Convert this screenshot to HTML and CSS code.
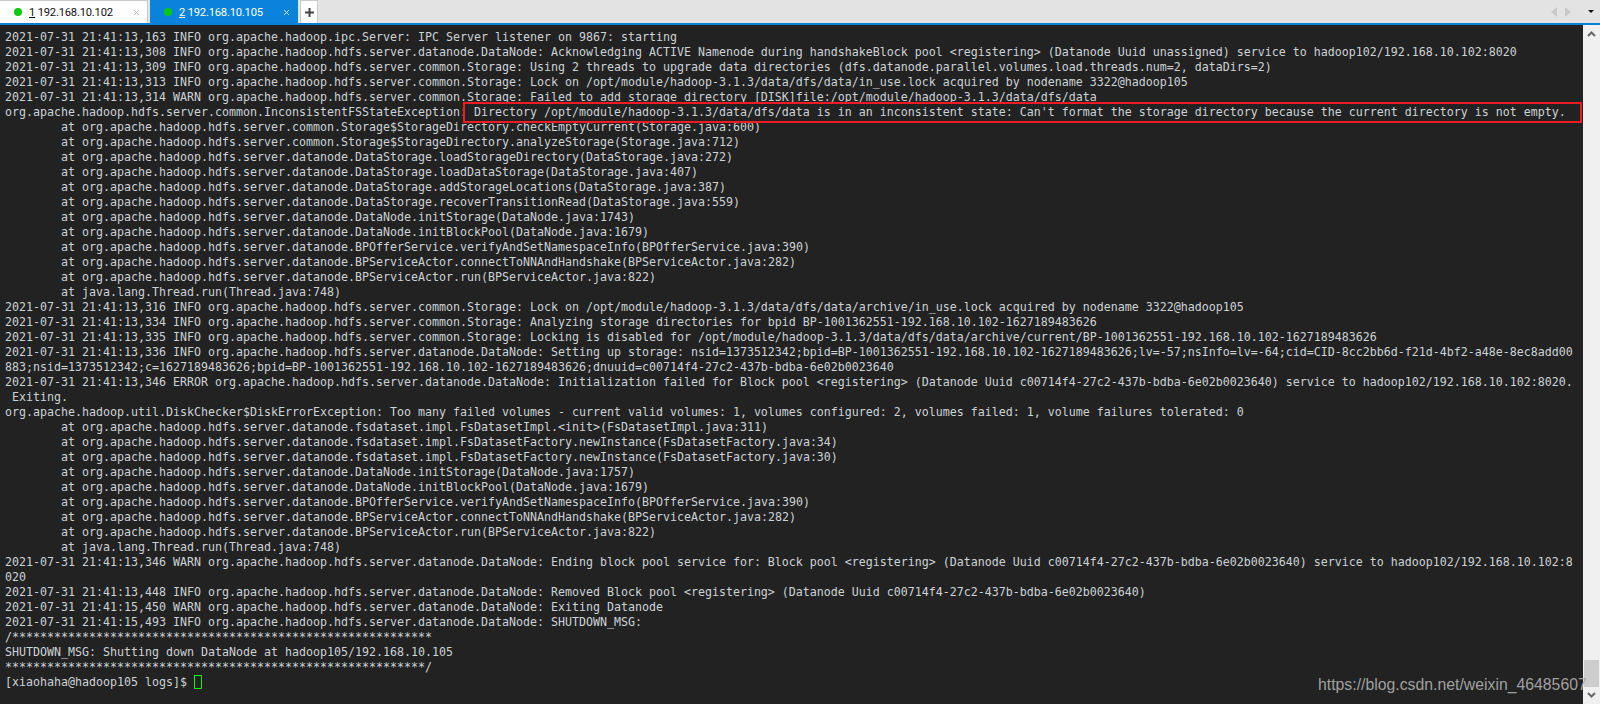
FILE: index.html
```html
<!DOCTYPE html>
<html lang="en">
<head>
<meta charset="utf-8">
<title>Xshell</title>
<link rel="stylesheet" href="styles.css">
</head>
<body>
<div class="app">
  <header class="tabbar">
    <div class="tab">
      <span class="dot"></span><span class="tab-label"><u>1</u> 192.168.10.102</span>
      <svg class="close" width="7" height="7" viewBox="0 0 7 7"><path d="M1 1l5 5M6 1L1 6" fill="none" stroke="#c4c4c4" stroke-width="1"/></svg>
    </div>
    <div class="tab active">
      <span class="dot"></span><span class="tab-label"><u>2</u> 192.168.10.105</span>
      <svg class="close" width="7" height="7" viewBox="0 0 7 7"><path d="M1 1l5 5M6 1L1 6" fill="none" stroke="#cfe6f7" stroke-width="1"/></svg>
    </div>
    <div class="add">
      <svg width="9" height="9" viewBox="0 0 9 9"><path d="M3.500 0h2v3.500H9v2H5.500V9h-2V5.500H0v-2h3.500z" fill="#444"/></svg>
    </div>
    <div class="tab-nav">
      <svg width="6" height="10" viewBox="0 0 6 10"><path d="M6 0v10L0 5z" fill="#c8c8c8"/></svg>
      <svg width="6" height="10" viewBox="0 0 6 10"><path d="M0 0v10L6 5z" fill="#c8c8c8"/></svg>
      <svg class="menu-arrow" width="6" height="3" viewBox="0 0 6 3"><path d="M0 0h6L3 3z" fill="#111"/></svg>
    </div>
  </header>
  <main class="body">
    <div class="term">
<pre class="output">2021-07-31 21:41:13,163 INFO org.apache.hadoop.ipc.Server: IPC Server listener on 9867: starting
2021-07-31 21:41:13,308 INFO org.apache.hadoop.hdfs.server.datanode.DataNode: Acknowledging ACTIVE Namenode during handshakeBlock pool &lt;registering&gt; (Datanode Uuid unassigned) service to hadoop102/192.168.10.102:8020
2021-07-31 21:41:13,309 INFO org.apache.hadoop.hdfs.server.common.Storage: Using 2 threads to upgrade data directories (dfs.datanode.parallel.volumes.load.threads.num=2, dataDirs=2)
2021-07-31 21:41:13,313 INFO org.apache.hadoop.hdfs.server.common.Storage: Lock on /opt/module/hadoop-3.1.3/data/dfs/data/in_use.lock acquired by nodename 3322@hadoop105
2021-07-31 21:41:13,314 WARN org.apache.hadoop.hdfs.server.common.Storage: Failed to add storage directory [DISK]file:/opt/module/hadoop-3.1.3/data/dfs/data
org.apache.hadoop.hdfs.server.common.InconsistentFSStateException: Directory /opt/module/hadoop-3.1.3/data/dfs/data is in an inconsistent state: Can't format the storage directory because the current directory is not empty.
	at org.apache.hadoop.hdfs.server.common.Storage$StorageDirectory.checkEmptyCurrent(Storage.java:600)
	at org.apache.hadoop.hdfs.server.common.Storage$StorageDirectory.analyzeStorage(Storage.java:712)
	at org.apache.hadoop.hdfs.server.datanode.DataStorage.loadStorageDirectory(DataStorage.java:272)
	at org.apache.hadoop.hdfs.server.datanode.DataStorage.loadDataStorage(DataStorage.java:407)
	at org.apache.hadoop.hdfs.server.datanode.DataStorage.addStorageLocations(DataStorage.java:387)
	at org.apache.hadoop.hdfs.server.datanode.DataStorage.recoverTransitionRead(DataStorage.java:559)
	at org.apache.hadoop.hdfs.server.datanode.DataNode.initStorage(DataNode.java:1743)
	at org.apache.hadoop.hdfs.server.datanode.DataNode.initBlockPool(DataNode.java:1679)
	at org.apache.hadoop.hdfs.server.datanode.BPOfferService.verifyAndSetNamespaceInfo(BPOfferService.java:390)
	at org.apache.hadoop.hdfs.server.datanode.BPServiceActor.connectToNNAndHandshake(BPServiceActor.java:282)
	at org.apache.hadoop.hdfs.server.datanode.BPServiceActor.run(BPServiceActor.java:822)
	at java.lang.Thread.run(Thread.java:748)
2021-07-31 21:41:13,316 INFO org.apache.hadoop.hdfs.server.common.Storage: Lock on /opt/module/hadoop-3.1.3/data/dfs/data/archive/in_use.lock acquired by nodename 3322@hadoop105
2021-07-31 21:41:13,334 INFO org.apache.hadoop.hdfs.server.common.Storage: Analyzing storage directories for bpid BP-1001362551-192.168.10.102-1627189483626
2021-07-31 21:41:13,335 INFO org.apache.hadoop.hdfs.server.common.Storage: Locking is disabled for /opt/module/hadoop-3.1.3/data/dfs/data/archive/current/BP-1001362551-192.168.10.102-1627189483626
2021-07-31 21:41:13,336 INFO org.apache.hadoop.hdfs.server.datanode.DataNode: Setting up storage: nsid=1373512342;bpid=BP-1001362551-192.168.10.102-1627189483626;lv=-57;nsInfo=lv=-64;cid=CID-8cc2bb6d-f21d-4bf2-a48e-8ec8add00
883;nsid=1373512342;c=1627189483626;bpid=BP-1001362551-192.168.10.102-1627189483626;dnuuid=c00714f4-27c2-437b-bdba-6e02b0023640
2021-07-31 21:41:13,346 ERROR org.apache.hadoop.hdfs.server.datanode.DataNode: Initialization failed for Block pool &lt;registering&gt; (Datanode Uuid c00714f4-27c2-437b-bdba-6e02b0023640) service to hadoop102/192.168.10.102:8020.
 Exiting.
org.apache.hadoop.util.DiskChecker$DiskErrorException: Too many failed volumes - current valid volumes: 1, volumes configured: 2, volumes failed: 1, volume failures tolerated: 0
	at org.apache.hadoop.hdfs.server.datanode.fsdataset.impl.FsDatasetImpl.&lt;init&gt;(FsDatasetImpl.java:311)
	at org.apache.hadoop.hdfs.server.datanode.fsdataset.impl.FsDatasetFactory.newInstance(FsDatasetFactory.java:34)
	at org.apache.hadoop.hdfs.server.datanode.fsdataset.impl.FsDatasetFactory.newInstance(FsDatasetFactory.java:30)
	at org.apache.hadoop.hdfs.server.datanode.DataNode.initStorage(DataNode.java:1757)
	at org.apache.hadoop.hdfs.server.datanode.DataNode.initBlockPool(DataNode.java:1679)
	at org.apache.hadoop.hdfs.server.datanode.BPOfferService.verifyAndSetNamespaceInfo(BPOfferService.java:390)
	at org.apache.hadoop.hdfs.server.datanode.BPServiceActor.connectToNNAndHandshake(BPServiceActor.java:282)
	at org.apache.hadoop.hdfs.server.datanode.BPServiceActor.run(BPServiceActor.java:822)
	at java.lang.Thread.run(Thread.java:748)
2021-07-31 21:41:13,346 WARN org.apache.hadoop.hdfs.server.datanode.DataNode: Ending block pool service for: Block pool &lt;registering&gt; (Datanode Uuid c00714f4-27c2-437b-bdba-6e02b0023640) service to hadoop102/192.168.10.102:8
020
2021-07-31 21:41:13,448 INFO org.apache.hadoop.hdfs.server.datanode.DataNode: Removed Block pool &lt;registering&gt; (Datanode Uuid c00714f4-27c2-437b-bdba-6e02b0023640)
2021-07-31 21:41:15,450 WARN org.apache.hadoop.hdfs.server.datanode.DataNode: Exiting Datanode
2021-07-31 21:41:15,493 INFO org.apache.hadoop.hdfs.server.datanode.DataNode: SHUTDOWN_MSG:
/************************************************************
SHUTDOWN_MSG: Shutting down DataNode at hadoop105/192.168.10.105
************************************************************/
[xiaohaha@hadoop105 logs]$ <span class="cursor"></span></pre>
      <div class="highlight"></div>
    </div>
    <aside class="scrollbar">
      <svg width="9" height="6" viewBox="0 0 9 6"><path d="M1 5l3.500-3.500L8 5" fill="none" stroke="#666" stroke-width="2"/></svg>
      <div class="track"><div class="thumb"></div></div>
      <svg width="9" height="6" viewBox="0 0 9 6"><path d="M1 1l3.500 3.500L8 1" fill="none" stroke="#666" stroke-width="2"/></svg>
    </aside>
  </main>
  <div class="watermark">https://blog.csdn.net/weixin_46485607</div>
</div>
</body>
</html>
```
FILE: styles.css
```css
html, body {
  margin: 0;
  padding: 0;
  height: 100%;
  overflow: hidden;
}
.app {
  position: relative;
  display: flex;
  flex-direction: column;
  height: 704px;
  width: 1600px;
}
.tabbar {
  display: flex;
  align-items: stretch;
  flex: none;
  height: 23px;
  background: #e3e3e3;
  border-bottom: 2px solid #0a7fd6;
  font-family: Roboto, "Liberation Sans", Arial, sans-serif;
  font-size: 11.2px;
  letter-spacing: -0.2px;
}
.tab {
  box-sizing: border-box;
  width: 148px;
  margin-right: 2px;
  padding-left: 14px;
  display: flex;
  align-items: center;
  background: #fff;
  color: #111;
  border: 1px solid #c9c9c9;
  border-left: 0;
  border-bottom: 0;
}
.tab.active {
  background: #0a83dc;
  color: #fff;
  border-color: #0a83dc;
}
.dot {
  width: 8px;
  height: 8px;
  border-radius: 50%;
  background: #0ac80f;
  margin-right: 7px;
}
.tab-label {
  flex: 1;
}
.close {
  margin-right: 7px;
}
.add {
  box-sizing: border-box;
  width: 18px;
  display: flex;
  align-items: center;
  justify-content: center;
  background: #fff;
  border: 1px solid #c9c9c9;
  border-bottom: 0;
}
.tab-nav {
  margin-left: auto;
  display: flex;
  align-items: center;
  gap: 8px;
  padding-right: 6px;
}
.menu-arrow {
  margin-left: 9px;
}
.body {
  flex: 1;
  display: flex;
  min-height: 0;
}
.term {
  position: relative;
  flex: 1;
  background: #222222;
  overflow: hidden;
}
.output {
  margin: 0;
  padding: 5px 0 0 5px;
  font-family: "DejaVu Sans Mono", monospace;
  font-size: 11.634px;
  line-height: 15px;
  color: #cdd2d6;
  tab-size: 8;
  white-space: pre;
}
.cursor {
  display: inline-block;
  box-sizing: border-box;
  width: 8px;
  height: 14px;
  border: 1px solid #00ff00;
  vertical-align: -3px;
}
.highlight {
  position: absolute;
  left: 463px;
  top: 77px;
  width: 1119px;
  height: 21px;
  box-sizing: border-box;
  border: 2px solid #ed1c24;
}
.watermark {
  position: absolute;
  left: 1318px;
  top: 676px;
  font-family: "Liberation Sans", Arial, sans-serif;
  font-size: 15.8px;
  color: rgba(170, 170, 170, 0.95);
  white-space: nowrap;
}
.scrollbar {
  width: 17px;
  background: #f0f0f0;
  display: flex;
  flex-direction: column;
  align-items: center;
  padding: 6px 0;
  box-sizing: border-box;
  gap: 5px;
}
.track {
  flex: 1;
  width: 100%;
  display: flex;
  flex-direction: column;
  justify-content: flex-end;
  align-items: center;
}
.thumb {
  width: 15px;
  height: 27px;
  background: #cdcdcd;
}
```
